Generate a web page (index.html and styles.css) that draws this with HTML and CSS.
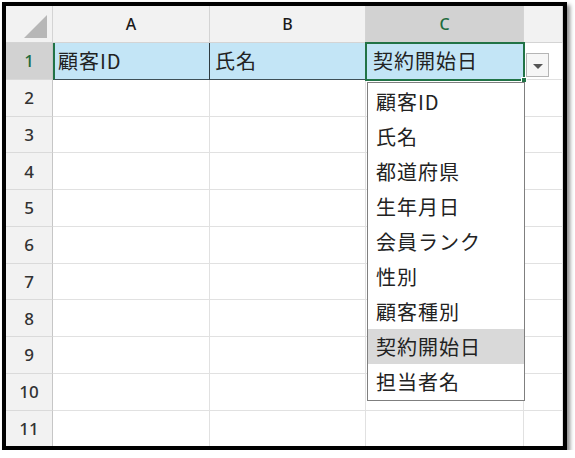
FILE: index.html
```html
<!DOCTYPE html>
<html lang="ja">
<head>
<meta charset="utf-8">
<link rel="stylesheet" href="styles.css">
</head>
<body>
<div class="frame">
  <div class="sheet">
    <div class="hd corner"><span class="tri"></span></div>
    <div class="hd col">A</div>
    <div class="hd col">B</div>
    <div class="hd col sel">C</div>
    <div class="hd col last"></div>

    <div class="hd row sel">1</div>
    <div class="cell blue a1">顧客ID</div>
    <div class="cell blue b1">氏名</div>
    <div class="cell blue c1">契約開始日</div>
    <div class="cell"></div>

    <div class="hd row">2</div><div class="cell"></div><div class="cell"></div><div class="cell"></div><div class="cell"></div>
    <div class="hd row">3</div><div class="cell"></div><div class="cell"></div><div class="cell"></div><div class="cell"></div>
    <div class="hd row">4</div><div class="cell"></div><div class="cell"></div><div class="cell"></div><div class="cell"></div>
    <div class="hd row">5</div><div class="cell"></div><div class="cell"></div><div class="cell"></div><div class="cell"></div>
    <div class="hd row">6</div><div class="cell"></div><div class="cell"></div><div class="cell"></div><div class="cell"></div>
    <div class="hd row">7</div><div class="cell"></div><div class="cell"></div><div class="cell"></div><div class="cell"></div>
    <div class="hd row">8</div><div class="cell"></div><div class="cell"></div><div class="cell"></div><div class="cell"></div>
    <div class="hd row">9</div><div class="cell"></div><div class="cell"></div><div class="cell"></div><div class="cell"></div>
    <div class="hd row">10</div><div class="cell"></div><div class="cell"></div><div class="cell"></div><div class="cell"></div>
    <div class="hd row">11</div><div class="cell"></div><div class="cell"></div><div class="cell"></div><div class="cell"></div>

    <div class="active"></div>
    <div class="handle"></div>
    <div class="ddbtn"><span class="arrow"></span></div>
    <ul class="list">
      <li>顧客ID</li>
      <li>氏名</li>
      <li>都道府県</li>
      <li>生年月日</li>
      <li>会員ランク</li>
      <li>性別</li>
      <li>顧客種別</li>
      <li class="hl">契約開始日</li>
      <li>担当者名</li>
    </ul>
  </div>
</div>
</body>
</html>
```

FILE: styles.css
```css
html, body {
  margin: 0;
  padding: 0;
  background: #ffffff;
}

.frame {
  margin: 2px 0 0 2px;
  width: 565px;
  height: 448px;
  box-sizing: border-box;
  border: 4px solid #000000;
  box-shadow: 3px 3px 4px rgba(0, 0, 0, 0.45);
  overflow: hidden;
  background: #ffffff;
}

.sheet {
  position: relative;
  display: grid;
  grid-template-columns: 47px 157px 156px 158px 1fr;
  grid-template-rows: 37px repeat(11, 36.75px);
  font-family: "Noto Sans CJK JP", "Noto Sans", sans-serif;
}

.hd {
  box-sizing: border-box;
  background: #f2f2f2;
  border-right: 1px solid #d4d4d4;
  border-bottom: 1px solid #d4d4d4;
  display: flex;
  align-items: center;
  justify-content: center;
  font-family: "Noto Sans", "DejaVu Sans", sans-serif;
  font-size: 16px;
  font-weight: 500;
  color: #1a1a1a;
}

.hd.row {
  color: #333333;
  font-size: 17px;
  border-right: 1px solid #c6c6c6;
  border-bottom: 1px solid #dadada;
}

.hd.sel {
  background: #d2d2d2;
  color: #1e6b3e;
}

.hd.col.sel {
  border-bottom: 1px solid #c0c0c0;
}

.corner {
  position: relative;
}

.tri {
  position: absolute;
  right: 5px;
  bottom: 4px;
  width: 0;
  height: 0;
  border-left: 23px solid transparent;
  border-bottom: 23px solid #b7b7b7;
}

.cell {
  box-sizing: border-box;
  border-right: 1px solid #e1e1e1;
  border-bottom: 1px solid #e1e1e1;
  display: flex;
  align-items: center;
  padding-left: 5px;
  font-size: 20px;
  letter-spacing: 1px;
  color: #222222;
  white-space: nowrap;
  overflow: hidden;
}

.cell.blue {
  background: #c3e5f6;
  border-bottom: 1px solid #3e4f57;
}

.a1 {
  border-left: 2px solid #217346;
  padding-left: 3px;
  border-right: 1px solid #2f3b40;
}

.b1 {
  border-right: 1px solid #2f3b40;
}

.c1 {
  padding-left: 7px;
}

.active {
  position: absolute;
  left: 359px;
  top: 36px;
  width: 160px;
  height: 39px;
  box-sizing: border-box;
  border: 2px solid #217346;
  pointer-events: none;
}

.handle {
  position: absolute;
  left: 515px;
  top: 71px;
  width: 6px;
  height: 6px;
  box-sizing: border-box;
  background: #217346;
  border: 1px solid #ffffff;
}

.ddbtn {
  position: absolute;
  left: 520px;
  top: 47px;
  width: 23px;
  height: 24px;
  box-sizing: border-box;
  border: 1px solid #b5b5b5;
  background: #f6f6f6;
  display: flex;
  align-items: center;
  justify-content: center;
}

.arrow {
  width: 0;
  height: 0;
  border-left: 5px solid transparent;
  border-right: 5px solid transparent;
  border-top: 5px solid #555555;
  margin-top: 2px;
}

.list {
  position: absolute;
  left: 361px;
  top: 76px;
  width: 158px;
  height: 319px;
  box-sizing: border-box;
  margin: 0;
  padding: 1px 0 0 0;
  list-style: none;
  background: #ffffff;
  border: 1px solid #7f7f7f;
}

.list li {
  height: 35px;
  display: flex;
  align-items: center;
  padding-left: 8px;
  font-size: 20px;
  letter-spacing: 1px;
  color: #222222;
  white-space: nowrap;
}

.list li.hl {
  background: #d9d9d9;
}
```
